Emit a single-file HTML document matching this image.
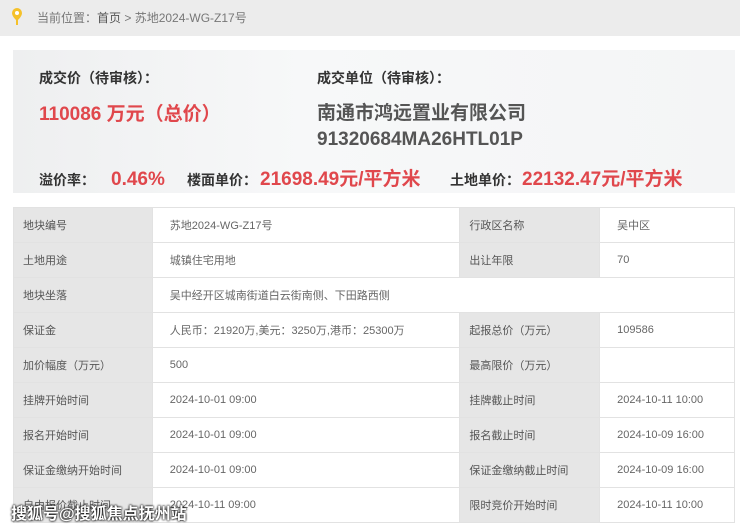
<html><head><style>
*{margin:0;padding:0;box-sizing:border-box}
body{width:740px;height:527px;overflow:hidden;background:#fff;font-family:"Liberation Sans","Noto Sans CJK SC",sans-serif;position:relative}
.a{position:absolute;white-space:nowrap}
.b{line-height:26px}
table{position:absolute;left:13px;top:207px;border-collapse:collapse;width:722px}
td{height:35px;border:1px solid #e2e2e2;font-size:11px;color:#666;padding-left:17px}
td.l{background:#e6e6e6;color:#555;padding-left:9px}
</style></head><body>
<div class="a" style="left:0;top:0;width:740px;height:36px;background:#ececec"></div>
<svg class="a" style="left:12px;top:8px" width="10" height="17" viewBox="0 0 10 17"><path d="M5 0a5 5 0 0 1 5 5c0 3-3 6-4 7v5h-2v-5C3 11 0 8 0 5a5 5 0 0 1 5-5z" fill="#f5c12a"/><circle cx="5" cy="5" r="2" fill="#fff"/></svg>
<div class="a" style="left:37px;top:9px;font-size:12px;color:#777">当前位置：<span style="color:#555">首页</span> &gt; 苏地2024-WG-Z17号</div>
<div class="a" style="left:13px;top:50px;width:722px;height:143px;background:linear-gradient(90deg,#eeeff0,#f7f8f9 40%,#f4f5f6)"></div>
<div class="a b" style="left:39px;top:65px;font-size:14px;font-weight:bold;color:#333">成交价（待审核）：</div>
<div class="a b" style="left:39px;top:102px;font-size:19px;font-weight:bold;color:#e0474c">110086 万元（总价）</div>
<div class="a b" style="left:317px;top:65px;font-size:14px;font-weight:bold;color:#333">成交单位（待审核）：</div>
<div class="a" style="left:317px;top:101px;font-size:19px;font-weight:bold;color:#555;line-height:26px">南通市鸿远置业有限公司<br>91320684MA26HTL01P</div>
<div class="a b" style="left:39px;top:167px;font-size:14px;font-weight:bold;color:#333">溢价率：</div>
<div class="a b" style="left:111px;top:167px;font-size:19px;font-weight:bold;color:#e0474c">0.46%</div>
<div class="a b" style="left:187px;top:167px;font-size:14px;font-weight:bold;color:#333">楼面单价：</div>
<div class="a b" style="left:260px;top:167px;font-size:19px;font-weight:bold;color:#e0474c">21698.49元/平方米</div>
<div class="a b" style="left:450px;top:167px;font-size:14px;font-weight:bold;color:#333">土地单价：</div>
<div class="a b" style="left:522px;top:167px;font-size:19px;font-weight:bold;color:#e0474c">22132.47元/平方米</div>
<table>
<colgroup><col style="width:139px"><col style="width:308px"><col style="width:140px"><col style="width:135px"></colgroup>
<tr><td class="l">地块编号</td><td>苏地2024-WG-Z17号</td><td class="l">行政区名称</td><td>吴中区</td></tr>
<tr><td class="l">土地用途</td><td>城镇住宅用地</td><td class="l">出让年限</td><td>70</td></tr>
<tr><td class="l">地块坐落</td><td colspan="3">吴中经开区城南街道白云街南侧、下田路西侧</td></tr>
<tr><td class="l">保证金</td><td>人民币：21920万,美元：3250万,港币：25300万</td><td class="l">起报总价（万元）</td><td>109586</td></tr>
<tr><td class="l">加价幅度（万元）</td><td>500</td><td class="l">最高限价（万元）</td><td></td></tr>
<tr><td class="l">挂牌开始时间</td><td>2024-10-01 09:00</td><td class="l">挂牌截止时间</td><td>2024-10-11 10:00</td></tr>
<tr><td class="l">报名开始时间</td><td>2024-10-01 09:00</td><td class="l">报名截止时间</td><td>2024-10-09 16:00</td></tr>
<tr><td class="l">保证金缴纳开始时间</td><td>2024-10-01 09:00</td><td class="l">保证金缴纳截止时间</td><td>2024-10-09 16:00</td></tr>
<tr><td class="l">自由报价截止时间</td><td>2024-10-11 09:00</td><td class="l">限时竞价开始时间</td><td>2024-10-11 10:00</td></tr>
</table>
<div class="a" style="left:11px;top:500px;font-size:16px;font-weight:bold;color:#fff;text-shadow:0 0 2px #000,0 0 2px #000">搜狐号@搜狐焦点抚州站</div>
</body></html>
